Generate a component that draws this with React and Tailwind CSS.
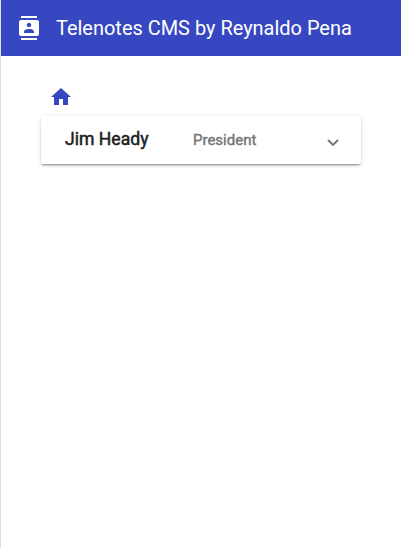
import React from "react";

function ContactsIcon() {
  return (
    <svg viewBox="0 0 24 24" className="h-6 w-6 shrink-0 fill-current">
      <path d="M20 0H4v2h16V0zM4 24h16v-2H4v2zM20 4H4c-1.100 0-2 .9-2 2v12c0 1.100.9 2 2 2h16c1.100 0 2-.9 2-2V6c0-1.100-.9-2-2-2zm-8 2.750c1.240 0 2.250 1.010 2.250 2.250s-1.010 2.250-2.250 2.250S9.750 10.240 9.750 9s1.010-2.250 2.250-2.250zM17 17H7v-1.500c0-1.670 3.330-2.500 5-2.500s5 .83 5 2.500V17z" />
    </svg>
  );
}

function HomeIcon() {
  return (
    <svg viewBox="0 0 24 24" className="h-6 w-6 fill-current">
      <path d="M10 20v-6h4v6h5v-8h3L12 3 2 12h3v8z" />
    </svg>
  );
}

function ChevronIcon() {
  return (
    <svg viewBox="0 0 12 8" className="mt-[6px] -mr-[2px] ml-auto h-2 w-3 fill-none stroke-[#757575] stroke-[1.9]">
      <path d="M1 1l5 5 5-5" />
    </svg>
  );
}

export default function App() {
  return (
    <div className="h-[548px] w-[401px] overflow-hidden border-l border-[#e0e0e0] bg-white font-['Roboto',sans-serif]">
      <header className="flex h-14 items-center bg-[#3747c1] pl-4 text-white">
        <ContactsIcon />
        <h1 className="ml-[15px] whitespace-nowrap text-[19.97px] leading-7">Telenotes CMS by Reynaldo Pena</h1>
      </header>
      <main className="w-[360px] pl-10 pt-[29px]">
        <a className="ml-2 block h-[31px] w-6 text-[#3747c1]">
          <HomeIcon />
        </a>
        <section className="flex h-12 w-[320px] items-center rounded-xs bg-white pl-6 pr-6 shadow-[0_3px_1px_-2px_rgba(0,0,0,0.2),0_2px_2px_0_rgba(0,0,0,0.14),0_1px_5px_0_rgba(0,0,0,0.12)]">
          <span className="w-32 pb-[3px] text-[17.6px] leading-6 text-[#212121] [-webkit-text-stroke:0.5px_#212121]">Jim Heady</span>
          <span className="text-[15px] leading-6 text-[#757575] [-webkit-text-stroke:0.4px_#757575]">President</span>
          <ChevronIcon />
        </section>
      </main>
    </div>
  );
}
